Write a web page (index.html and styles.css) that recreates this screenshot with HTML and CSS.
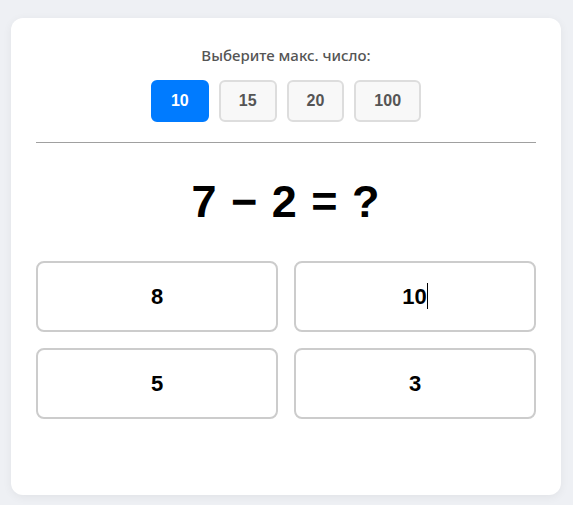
FILE: index.html
```html
<!DOCTYPE html>
<html lang="ru">
<head>
    <meta charset="UTF-8">
    <meta name="viewport" content="width=device-width, initial-scale=1.0">
    <title>Вычитание</title>
    <link rel="stylesheet" href="styles.css">
</head>
<body>
    <main class="game-card">
        <div class="range-picker">
            <p class="range-label">Выберите макс. число:</p>
            <div class="range-buttons">
                <button class="range-btn active">10</button>
                <button class="range-btn">15</button>
                <button class="range-btn">20</button>
                <button class="range-btn">100</button>
            </div>
        </div>

        <hr class="divider">

        <h1 class="question">7 − 2 = ?</h1>

        <div class="answers">
            <button class="answer-btn">8</button>
            <button class="answer-btn">10<span class="caret"></span></button>
            <button class="answer-btn">5</button>
            <button class="answer-btn">3</button>
        </div>

        <div class="feedback"></div>
    </main>
</body>
</html>
```

FILE: styles.css
```css
* {
    margin: 0;
    padding: 0;
    box-sizing: border-box;
}

body {
    background: #eef0f4;
    font-family: 'Liberation Sans', Arial, sans-serif;
    padding: 18px 12px 10px 11px;
}

.game-card {
    background: #fff;
    border-radius: 12px;
    box-shadow: 0 2px 10px rgba(0, 0, 0, 0.06);
    padding: 27px 25px 0;
    height: 477px;
}

.range-picker {
    text-align: center;
}

.range-label {
    font-family: 'Noto Sans', 'Open Sans', sans-serif;
    font-size: 15px;
    font-weight: 500;
    color: #555;
    line-height: 20px;
    margin-bottom: 15px;
}

.range-buttons {
    display: flex;
    justify-content: center;
    gap: 10px;
}

.range-btn {
    font-family: 'Liberation Sans', Arial, sans-serif;
    font-size: 16px;
    font-weight: bold;
    color: #555;
    background: #f8f8f8;
    border: 2px solid #ddd;
    border-radius: 6px;
    height: 42px;
    padding: 0 18px;
    cursor: pointer;
}

.range-btn.active {
    background: #007bff;
    border-color: #007bff;
    color: #fff;
}

.divider {
    border: none;
    border-top: 1px solid #a0a0a0;
    margin: 20px 0 0;
}

.question {
    font-size: 45px;
    font-weight: bold;
    letter-spacing: 1px;
    color: #000;
    text-align: center;
    line-height: 56px;
    margin: 31px 0 31px;
}

.answers {
    display: grid;
    grid-template-columns: 1fr 1fr;
    gap: 16px;
}

.answer-btn {
    font-family: 'Liberation Sans', Arial, sans-serif;
    font-size: 22px;
    font-weight: bold;
    color: #000;
    background: #fff;
    border: 2px solid #ccc;
    border-radius: 8px;
    height: 71px;
    cursor: pointer;
}

.caret {
    display: inline-block;
    width: 1px;
    height: 26px;
    background: #000;
    vertical-align: -5px;
}
```
